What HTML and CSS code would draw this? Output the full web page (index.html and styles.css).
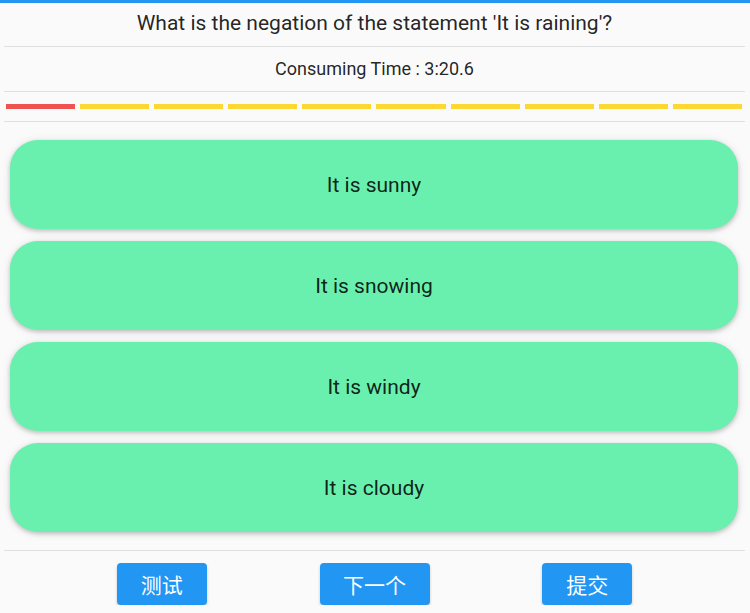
FILE: index.html
```html
<!DOCTYPE html>
<html>
<head>
<meta charset="utf-8">
<link rel="stylesheet" href="styles.css">
</head>
<body>
<div class="topbar"></div>
<div class="page">
  <div class="title">What is the negation of the statement 'It is raining'?</div>
  <div class="divider"></div>
  <div class="timer">Consuming Time : 3:20.6</div>
  <div class="divider"></div>
  <div class="progress">
    <span class="seg seg-red"></span>
    <span class="seg"></span>
    <span class="seg"></span>
    <span class="seg"></span>
    <span class="seg"></span>
    <span class="seg"></span>
    <span class="seg"></span>
    <span class="seg"></span>
    <span class="seg"></span>
    <span class="seg"></span>
  </div>
  <div class="divider"></div>
  <div class="options">
    <div class="option">It is sunny</div>
    <div class="option">It is snowing</div>
    <div class="option">It is windy</div>
    <div class="option">It is cloudy</div>
  </div>
  <div class="divider"></div>
  <div class="actions">
    <button class="btn">测试</button>
    <button class="btn btn-wide">下一个</button>
    <button class="btn">提交</button>
  </div>
</div>
</body>
</html>
```

FILE: styles.css
```css
html, body {
  margin: 0;
  padding: 0;
  background: #fafafa;
  font-family: Roboto, "Noto Sans CJK SC", sans-serif;
  color: rgba(0, 0, 0, 0.87);
}
.topbar {
  height: 3px;
  background: #2196f3;
}
.page {
  padding: 0 5px 0 4px;
  display: flex;
  flex-direction: column;
}
.title {
  height: 39px;
  padding-bottom: 4px;
  display: flex;
  align-items: center;
  justify-content: center;
  font-size: 21px;
}
.divider {
  height: 1px;
  background: #e0e0e0;
}
.timer {
  height: 42px;
  padding-bottom: 2px;
  display: flex;
  align-items: center;
  justify-content: center;
  font-size: 18px;
}
.progress {
  height: 29px;
  display: flex;
  align-items: center;
  gap: 5px;
  padding: 0 3px 0 2px;
}
.seg {
  flex: 1;
  height: 5px;
  background: #fdd835;
}
.seg-red {
  background: #ef5350;
}
.options {
  display: flex;
  flex-direction: column;
  gap: 12px;
  padding: 18px 7px 18px 6px;
}
.option {
  height: 89px;
  border-radius: 28px;
  background: #69f0ae;
  display: flex;
  align-items: center;
  justify-content: center;
  font-size: 21px;
  box-shadow: 0 2px 4px rgba(0, 0, 0, 0.18), 0 1px 10px rgba(0, 0, 0, 0.1);
}
.actions {
  display: flex;
  justify-content: space-evenly;
  padding-top: 12px;
}
.btn {
  height: 42px;
  width: 90px;
  border: none;
  border-radius: 4px;
  background: #2196f3;
  color: #fff;
  font-family: "Noto Sans CJK SC", sans-serif;
  font-size: 21px;
  padding: 0;
  box-shadow: 0 2px 3px rgba(0, 0, 0, 0.2);
}
.btn-wide {
  width: 110px;
}
```
